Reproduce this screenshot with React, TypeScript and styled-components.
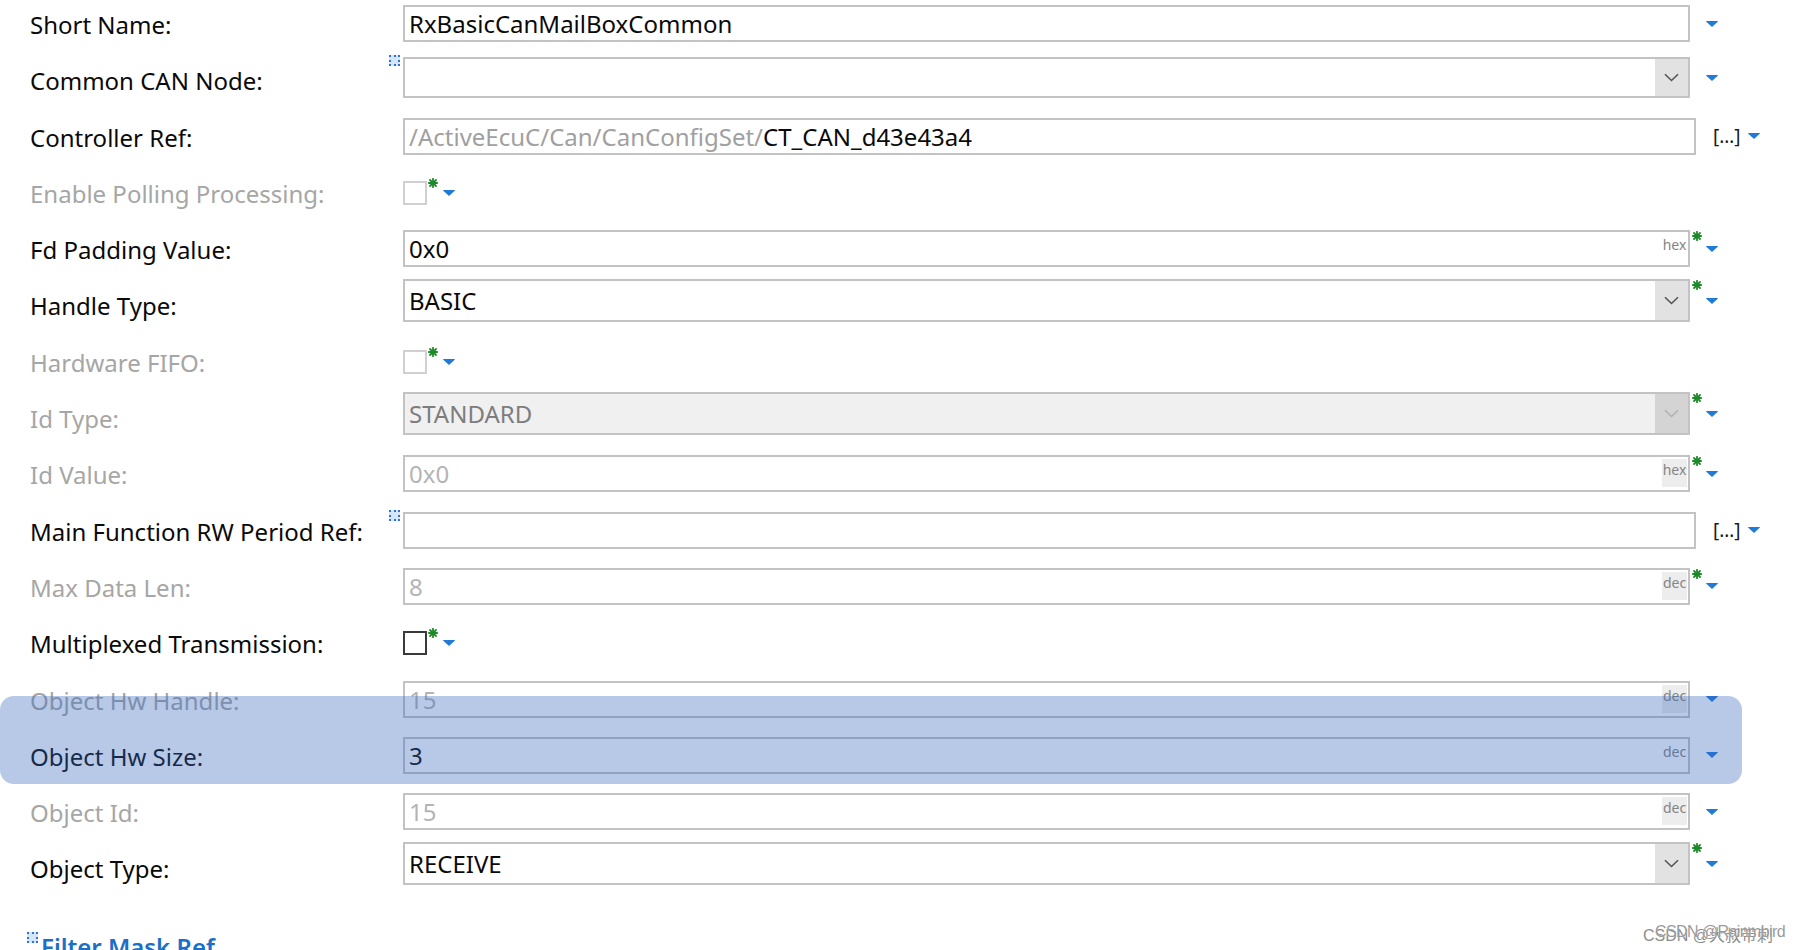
import { createGlobalStyle, styled } from "styled-components";

type Kind = "text" | "combo" | "check" | "ref";

interface FieldRow {
  label: string;
  kind: Kind;
  disabled?: boolean;
  value?: string;
  prefix?: string;
  suffix?: "hex" | "dec";
  star?: boolean;
  dotted?: boolean;
  top?: number;
}

const rows: FieldRow[] = [
  { label: "Short Name:", kind: "text", value: "RxBasicCanMailBoxCommon" },
  { label: "Common CAN Node:", kind: "combo", dotted: true, top: 4 },
  { label: "Controller Ref:", kind: "ref", prefix: "/ActiveEcuC/Can/CanConfigSet/", value: "CT_CAN_d43e43a4" },
  { label: "Enable Polling Processing:", kind: "check", disabled: true, star: true },
  { label: "Fd Padding Value:", kind: "text", value: "0x0", suffix: "hex", star: true },
  { label: "Handle Type:", kind: "combo", value: "BASIC", star: true },
  { label: "Hardware FIFO:", kind: "check", disabled: true, star: true },
  { label: "Id Type:", kind: "combo", disabled: true, value: "STANDARD", star: true },
  { label: "Id Value:", kind: "text", disabled: true, value: "0x0", suffix: "hex", star: true },
  { label: "Main Function RW Period Ref:", kind: "ref", dotted: true },
  { label: "Max Data Len:", kind: "text", disabled: true, value: "8", suffix: "dec", star: true },
  { label: "Multiplexed Transmission:", kind: "check", star: true },
  { label: "Object Hw Handle:", kind: "text", disabled: true, value: "15", suffix: "dec" },
  { label: "Object Hw Size:", kind: "text", value: "3", suffix: "dec" },
  { label: "Object Id:", kind: "text", disabled: true, value: "15", suffix: "dec" },
  { label: "Object Type:", kind: "combo", value: "RECEIVE", star: true },
];

const Star = ({ show, lift = 1 }: { show: boolean; lift?: number }) => (
  <StarMark $show={show} $lift={lift} width="10" height="10" viewBox="0 0 10 10">
    <g stroke="#1d8a2a" strokeWidth="1.8" strokeLinecap="round">
      <line x1="5" y1="0.8" x2="5" y2="9.2" />
      <line x1="0.8" y1="5" x2="9.2" y2="5" />
      <line x1="2" y1="2" x2="8" y2="8" />
      <line x1="8" y1="2" x2="2" y2="8" />
    </g>
  </StarMark>
);

const MenuArrow = () => (
  <svg width="12" height="6" viewBox="0 0 12 6">
    <path d="M0 0.5 Q0 0 0.6 0 H11.4 Q12 0 12 0.5 L6 6 Z" fill="#1f7ad8" />
  </svg>
);

const Chevron = ({ disabled }: { disabled?: boolean }) => (
  <svg width="15" height="9" viewBox="0 0 15 9">
    <polyline
      points="1,1.2 7.5,7.5 14,1.2"
      fill="none"
      stroke={disabled ? "#b2b2b2" : "#555"}
      strokeWidth="1.6"
    />
  </svg>
);

const renderField = (row: FieldRow) => {
  const muted = row.disabled;

  if (row.kind === "check") {
    return (
      <Field $top={15}>
        <CheckBox $disabled={row.disabled} />
        <Trail $compact>
          <Star show={!!row.star} lift={-3} />
          <MenuArrow />
        </Trail>
      </Field>
    );
  }

  if (row.kind === "combo") {
    return (
      <Field $top={row.top ?? 1}>
        {row.dotted && <DottedMark />}
        <Box $w={1287} $h={row.top ? 41 : 43} $shade={row.disabled}>
          <Value $tone={row.disabled ? "dim" : "normal"}>{row.value}</Value>
          <ComboButton $disabled={row.disabled}>
            <Chevron disabled={row.disabled} />
          </ComboButton>
        </Box>
        <Trail>
          <Star show={!!row.star} />
          <MenuArrow />
        </Trail>
      </Field>
    );
  }

  if (row.kind === "ref") {
    return (
      <Field $top={8}>
        {row.dotted && <DottedMark />}
        <Box $w={1293} $h={37}>
          {row.prefix && <Value $tone="path">{row.prefix}</Value>}
          <Value $tone="normal">{row.value}</Value>
        </Box>
        <RefTrail>
          <RefDots>[…]</RefDots>
          <MenuArrow />
        </RefTrail>
      </Field>
    );
  }

  return (
    <Field $top={8}>
      <Box $w={1287} $h={37}>
        <Value $tone={muted ? "muted" : "normal"}>{row.value}</Value>
        {row.suffix && <Suffix $shade={row.disabled}>{row.suffix}</Suffix>}
      </Box>
      <Trail>
        <Star show={!!row.star} />
        <MenuArrow />
      </Trail>
    </Field>
  );
};

const App = () => {
  return (
    <>
      <GlobalStyle />
      <Page>
        <Form>
          {rows.map((row) => (
            <Row key={row.label}>
              <Label $disabled={row.disabled}>{row.label}</Label>
              {renderField(row)}
            </Row>
          ))}
        </Form>
        <SectionLink>
          <DottedIcon />
          Filter Mask Ref
        </SectionLink>
        <Highlight />
        <Watermark>
          <span>CSDN @大叔带刺</span>
          <WatermarkGhost>CSDN @Rainmbird</WatermarkGhost>
        </Watermark>
      </Page>
    </>
  );
};

const GlobalStyle = createGlobalStyle`
  html, body {
    margin: 0;
    padding: 0;
    background: #ffffff;
  }
  body {
    font-family: "Noto Sans", "Noto Sans CJK SC", sans-serif;
  }
`;

const Page = styled.div`
  position: relative;
  width: 1795px;
  height: 950px;
  overflow: hidden;
  background: #ffffff;
`;

const Form = styled.div`
  display: flex;
  flex-direction: column;
  margin-top: -3px;
`;

const Row = styled.div`
  display: flex;
  align-items: flex-start;
  height: 56.3px;
`;

const Label = styled.div<{ $disabled?: boolean }>`
  flex: 0 0 403px;
  box-sizing: border-box;
  padding-left: 30px;
  height: 56.3px;
  line-height: 55px;
  font-size: 24px;
  white-space: nowrap;
  color: ${(p) => (p.$disabled ? "#a6a6a6" : "#0a0a0a")};
`;

const Field = styled.div<{ $top: number }>`
  position: relative;
  display: flex;
  margin-top: ${(p) => p.$top}px;
`;

const DottedMark = styled.span`
  position: absolute;
  left: -14px;
  top: -2px;
  width: 7px;
  height: 7px;
  border: 2px dotted #2f74d0;
  background: #d6e6fa;
`;

const Box = styled.div<{ $w: number; $h: number; $shade?: boolean }>`
  display: flex;
  align-items: center;
  box-sizing: border-box;
  width: ${(p) => p.$w}px;
  height: ${(p) => p.$h}px;
  padding-left: 4px;
  border: 2px solid #c3c3c3;
  background: ${(p) => (p.$shade ? "#f0f0f0" : "#ffffff")};
  font-size: 24px;
`;

const toneColor = {
  normal: "#0a0a0a",
  muted: "#b4b4b4",
  dim: "#7d7d7d",
  path: "#a0a0a0",
};

const Value = styled.span<{ $tone: keyof typeof toneColor }>`
  white-space: nowrap;
  color: ${(p) => toneColor[p.$tone]};
`;

const Suffix = styled.span<{ $shade?: boolean }>`
  align-self: flex-start;
  margin: 2px 1px 0 auto;
  width: 25px;
  height: 28px;
  box-sizing: border-box;
  padding-top: 2px;
  text-align: center;
  font-size: 14px;
  line-height: 18px;
  color: #858585;
  background: ${(p) => (p.$shade ? "#ededed" : "transparent")};
`;

const ComboButton = styled.div<{ $disabled?: boolean }>`
  display: flex;
  align-items: center;
  justify-content: center;
  align-self: stretch;
  margin-left: auto;
  width: 33px;
  background: ${(p) => (p.$disabled ? "#d4d4d4" : "#e2e2e2")};
`;

const CheckBox = styled.span<{ $disabled?: boolean }>`
  display: block;
  box-sizing: border-box;
  width: 24px;
  height: 24px;
  border: 2px solid ${(p) => (p.$disabled ? "#d0d0d0" : "#3a3a3a")};
  background: #ffffff;
`;

const Trail = styled.div<{ $compact?: boolean }>`
  display: flex;
  align-items: center;
  gap: ${(p) => (p.$compact ? 5 : 4)}px;
  margin-left: ${(p) => (p.$compact ? 1 : 2)}px;
`;

const StarMark = styled.svg<{ $show: boolean; $lift: number }>`
  align-self: flex-start;
  margin-top: ${(p) => p.$lift}px;
  visibility: ${(p) => (p.$show ? "visible" : "hidden")};
`;

const RefTrail = styled.div`
  display: flex;
  align-items: center;
  gap: 7px;
  margin-left: 17px;
`;

const RefDots = styled.span`
  font-size: 19px;
  color: #1a1a1a;
`;

const SectionLink = styled.div`
  display: flex;
  align-items: flex-start;
  margin: 32px 0 0 27px;
  font-size: 24px;
  font-weight: 600;
  color: #1b6fc6;
`;

const DottedIcon = styled.span`
  flex: 0 0 auto;
  width: 7px;
  height: 7px;
  margin: 2px 3px 0 0;
  border: 2px dotted #2f74d0;
  background: #d6e6fa;
`;

const Highlight = styled.div`
  position: absolute;
  left: 0;
  top: 696px;
  width: 1742px;
  height: 88px;
  border-radius: 14px;
  background: rgba(52, 101, 189, 0.35);
  pointer-events: none;
`;

const Watermark = styled.div`
  position: absolute;
  left: 1643px;
  top: 922px;
  font-family: "Liberation Sans", "Noto Sans CJK SC", sans-serif;
  font-size: 16px;
  color: #8c8c8c;
  white-space: nowrap;
  text-shadow: 0 0 1px #ffffff;
`;

const WatermarkGhost = styled.span`
  position: absolute;
  left: 12px;
  top: 1px;
  letter-spacing: -0.6px;
  color: rgba(120, 120, 120, 0.75);
`;

export default App;
